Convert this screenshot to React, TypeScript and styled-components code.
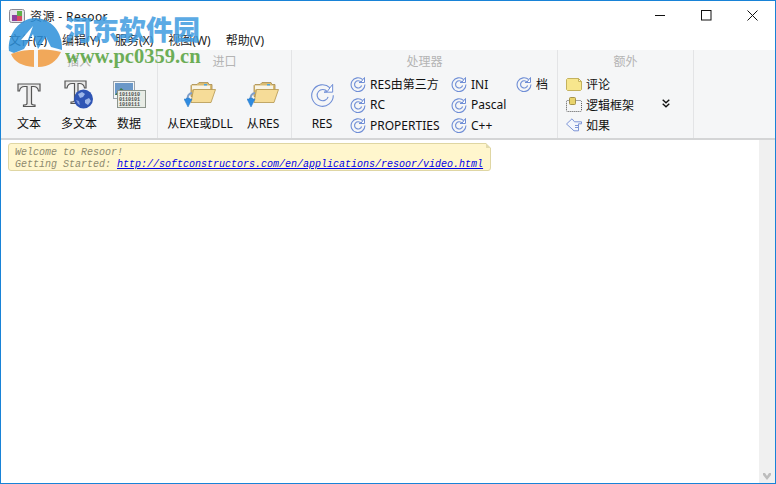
import { createGlobalStyle, styled } from "styled-components";

const GlobalStyle = createGlobalStyle`
  html, body {
    margin: 0;
    padding: 0;
    height: 100%;
    overflow: hidden;
  }
  #root {
    height: 100%;
  }
`;

const uiFont = `"Noto Sans", "Noto Sans CJK SC", sans-serif`;

function TextIcon() {
  return (
    <svg width="28" height="28" viewBox="0 0 28 28">
      <path
        d="M3 3h22v7h-1.500c-.5-3-1.500-4.500-5-4.500h-2v17c0 1 1 1.500 3.500 1.500v1.500H8.500V24c2.500 0 3.500-.5 3.500-1.500v-17H9.500c-3.500 0-4.500 1.500-5 4.500H3z"
        fill="#e9e9e9"
        stroke="#555"
        strokeWidth="1.200"
      />
    </svg>
  );
}

function RichTextIcon() {
  return (
    <svg width="30" height="30" viewBox="0 0 30 30">
      <path
        d="M1 1h21v7h-1.500c-.5-3-1.500-4.500-5-4.500h-1.500v17c0 1 1 1.500 3.500 1.500v1.500H7V22c2.500 0 3.500-.5 3.500-1.500v-17H8c-3.500 0-4.500 1.500-5 4.500H1z"
        fill="#e9e9e9"
        stroke="#555"
        strokeWidth="1.200"
      />
      <circle cx="19.500" cy="19" r="9.500" fill="#2f55b5" />
      <path d="M14 14l4-2 3 2-2 3-3 1zM21 20l4-2 2 3-3 4-3-2z" fill="#9db6e8" />
      <path d="M12 20l3 1 1 4-2-1z" fill="#7f9ade" />
    </svg>
  );
}

function DataIcon() {
  return (
    <svg width="33" height="27" viewBox="0 0 33 27">
      <rect x="0.500" y="0.500" width="21" height="17" fill="#f4f6f8" stroke="#9aa3ab" />
      <rect x="2" y="2" width="18" height="12" fill="#6b98c8" />
      <path d="M2 14l6-7 5 4 3-2 4 5z" fill="#3f7a48" />
      <rect x="4.500" y="9.500" width="28" height="17" fill="#e8ece6" stroke="#8b948c" />
      <g fill="#4b5150" fontFamily="Liberation Mono, monospace" fontSize="5" fontWeight="700">
        <text x="6" y="14.500">1011010</text>
        <text x="6" y="19.500">0110101</text>
        <text x="6" y="24.500">1010111</text>
      </g>
    </svg>
  );
}

function FolderImportIcon() {
  return (
    <svg width="32" height="26" viewBox="0 0 32 26">
      <path d="M7 3.500l1-1h5l2-2h9l1 2h3v12H7z" fill="#d9bc72" stroke="#a88c4c" strokeWidth="0.800" />
      <path d="M8 3.500h18v4H8z" fill="#f8f4e6" />
      <rect x="20" y="2" width="3" height="1.500" fill="#49a6e6" />
      <path d="M9.500 7.500h22l-4.500 13H7z" fill="#f6dc98" stroke="#b4954e" strokeWidth="0.800" />
      <path d="M8 11c-3 .5-4.500 3-4.500 6" fill="none" stroke="#7f9fc9" strokeWidth="2" />
      <path d="M0 17h2.500v-1h3v1H8l-4 8z" fill="#2f8be0" stroke="#2a78c4" strokeWidth="0.500" />
    </svg>
  );
}

function RefreshIcon({ size }: { size: number }) {
  return (
    <svg width={size} height={size} viewBox="0 0 16 16" fill="none" stroke="#6f8ed6">
      <path d="M12.800 3.700A6.900 6.900 0 1 0 14.900 8.500" strokeWidth="1.100" vectorEffect="non-scaling-stroke" />
      <path d="M11 6.200A3.600 3.600 0 1 0 11.600 9.500" strokeWidth="1.100" vectorEffect="non-scaling-stroke" />
      <path d="M9 6.500h5.500V1.500l-1.700 2.200L11 6.200z" fill="#fff" strokeWidth="1" vectorEffect="non-scaling-stroke" />
    </svg>
  );
}

function NoteIcon() {
  return (
    <svg width="16" height="13" viewBox="0 0 16 13">
      <path d="M1.500.500h11l3 3v8l-1 1h-13l-1-1v-10z" fill="#f7e68d" stroke="#c4b25e" />
      <path d="M12.500.500v3h3z" fill="#fdf8d8" stroke="#c4b25e" />
    </svg>
  );
}

function FrameIcon() {
  return (
    <svg width="16" height="15" viewBox="0 0 16 15">
      <rect x="0.500" y="3.500" width="15" height="11" rx="1" fill="none" stroke="#555" strokeDasharray="1 1" />
      <rect x="3.500" y="0.500" width="6" height="7" rx="1" fill="#e8d36c" stroke="#a5934a" />
    </svg>
  );
}

function PointerIcon() {
  return (
    <svg width="16" height="14" viewBox="0 0 16 14" fill="#f3f6fc" stroke="#7d95d6">
      <path d="M.5 6L6 .8l2.500 3h7v2h-3v7H8L.5 6z" />
      <path d="M9 7.500h3.500M9 9.500h3.500" fill="none" />
    </svg>
  );
}

function WatermarkLogo() {
  return (
    <svg width="56" height="50" viewBox="0 0 56 50">
      <path
        d="M2 33C0 15 14 0 28 0c16 0 28 14 27 32l-11-3-5-10-8 12-5-15-9 15-10 4z"
        fill="#2b8fd9"
        fillOpacity="0.85"
      />
      <path d="M14 22l12-14-5 14z" fill="#fff" />
      <path d="M4 36c10-4 18-4 23-4v17C15 48 7 44 4 36z" fill="#f09a3e" fillOpacity="0.85" />
      <path d="M31 32c7-1 15 0 23 2-4 9-12 15-23 15z" fill="#f09a3e" fillOpacity="0.85" />
    </svg>
  );
}

function ScrollDownGlyph() {
  return (
    <svg width="8" height="7" viewBox="0 0 8 7">
      <path d="M0 0h2l2 3 2-3h2v2L4 7 0 2z" fill="#bdbdbd" />
    </svg>
  );
}

export default function App() {
  return (
    <Win>
      <GlobalStyle />
      <Watermark>
        <WatermarkLogo />
        <WatermarkText>
          <WatermarkTitle>河东软件园</WatermarkTitle>
          <WatermarkUrl>www.pc0359.cn</WatermarkUrl>
        </WatermarkText>
      </Watermark>

      <TitleBar>
        <AppIcon>
          <svg width="16" height="14" viewBox="0 0 16 14">
            <rect x="0.500" y="0.500" width="15" height="13" rx="2" fill="#e5e3ea" stroke="#8a8892" />
            <rect x="3" y="6" width="5" height="6" fill="#8e3f9e" />
            <rect x="8" y="2" width="5" height="5" fill="#5fb04a" />
            <rect x="8" y="7" width="5" height="5" fill="#d84a64" />
          </svg>
        </AppIcon>
        <TitleText>资源 - Resoor</TitleText>
        <WindowButtons>
          <WindowButton>
            <svg width="11" height="11" viewBox="0 0 11 11">
              <path d="M0 5.500h10" stroke="#111" />
            </svg>
          </WindowButton>
          <WindowButton>
            <svg width="11" height="11" viewBox="0 0 11 11">
              <rect x="0.500" y="0.500" width="9.500" height="9.500" fill="none" stroke="#111" />
            </svg>
          </WindowButton>
          <WindowButton>
            <svg width="11" height="11" viewBox="0 0 11 11">
              <path d="M.5.500l10 10M10.500.500l-10 10" stroke="#111" />
            </svg>
          </WindowButton>
        </WindowButtons>
      </TitleBar>

      <MenuBar>
        <MenuItem>文件(Z)</MenuItem>
        <MenuItem>编辑(Y)</MenuItem>
        <MenuItem>服务(X)</MenuItem>
        <MenuItem>视图(W)</MenuItem>
        <MenuItem>帮助(V)</MenuItem>
      </MenuBar>

      <Ribbon>
        <Group $width={157}>
          <GroupTitle>插入</GroupTitle>
          <GroupBody $gap={0} $pad={3}>
            <LargeButton $width={50}>
              <LargeIcon><TextIcon /></LargeIcon>
              <span>文本</span>
            </LargeButton>
            <LargeButton $width={50}>
              <LargeIcon><RichTextIcon /></LargeIcon>
              <span>多文本</span>
            </LargeButton>
            <LargeButton $width={50}>
              <LargeIcon><DataIcon /></LargeIcon>
              <span>数据</span>
            </LargeButton>
          </GroupBody>
        </Group>
        <Group $width={134}>
          <GroupTitle>进口</GroupTitle>
          <GroupBody $gap={0} $pad={5}>
            <LargeButton $width={74}>
              <LargeIcon><FolderImportIcon /></LargeIcon>
              <span>从EXE或DLL</span>
            </LargeButton>
            <LargeButton $width={52}>
              <LargeIcon><FolderImportIcon /></LargeIcon>
              <span>从RES</span>
            </LargeButton>
          </GroupBody>
        </Group>
        <Group $width={266}>
          <GroupTitle>处理器</GroupTitle>
          <GroupBody $gap={6} $pad={8}>
            <LargeButton $width={44}>
              <LargeIcon><RefreshIcon size={25} /></LargeIcon>
              <span>RES</span>
            </LargeButton>
            <SmallColumn $width={95}>
              <SmallItem><RefreshIcon size={16} />RES由第三方</SmallItem>
              <SmallItem><RefreshIcon size={16} />RC</SmallItem>
              <SmallItem><RefreshIcon size={16} />PROPERTIES</SmallItem>
            </SmallColumn>
            <SmallColumn $width={59}>
              <SmallItem><RefreshIcon size={16} />INI</SmallItem>
              <SmallItem><RefreshIcon size={16} />Pascal</SmallItem>
              <SmallItem><RefreshIcon size={16} />C++</SmallItem>
            </SmallColumn>
            <SmallColumn $width={36}>
              <SmallItem><RefreshIcon size={16} />档</SmallItem>
            </SmallColumn>
          </GroupBody>
        </Group>
        <Group $width={136}>
          <GroupTitle>额外</GroupTitle>
          <GroupBody $gap={0} $pad={8}>
            <SmallColumn $width={96}>
              <SmallItem><NoteIcon />评论</SmallItem>
              <SmallItem><FrameIcon />逻辑框架</SmallItem>
              <SmallItem><PointerIcon />如果</SmallItem>
            </SmallColumn>
            <MoreButton>
              <svg width="8" height="9" viewBox="0 0 8 9" fill="none" stroke="#111" strokeWidth="1.400">
                <path d="M.7.700L4 3.700 7.300.700M.7 4.700L4 7.700l3.300-3" />
              </svg>
            </MoreButton>
          </GroupBody>
        </Group>
      </Ribbon>

      <Content>
        <Editor>
          <Note>
            <NoteLine>Welcome to Resoor!</NoteLine>
            <NoteLine>
              Getting Started: <NoteLink>http://softconstructors.com/en/applications/resoor/video.html</NoteLink>
            </NoteLine>
            <NoteCorner />
          </Note>
        </Editor>
        <Scrollbar>
          <ScrollDownGlyph />
        </Scrollbar>
      </Content>
    </Win>
  );
}

const Win = styled.div`
  position: relative;
  box-sizing: border-box;
  width: 776px;
  height: 484px;
  display: flex;
  flex-direction: column;
  background: #fff;
  border: 1px solid #1883d7;
  font-family: ${uiFont};
  color: #111;
  overflow: hidden;
`;

const Watermark = styled.div`
  position: absolute;
  left: 6px;
  top: 17px;
  display: flex;
  gap: 2px;
  pointer-events: none;
  z-index: 2;
`;

const WatermarkText = styled.div`
  display: flex;
  flex-direction: column;
  margin-top: -5px;
`;

const WatermarkTitle = styled.div`
  font-family: "Noto Sans CJK SC", sans-serif;
  font-weight: 900;
  font-size: 27px;
  line-height: 32px;
  color: #3f9ce0;
  opacity: 0.85;
`;

const WatermarkUrl = styled.div`
  font-family: "Liberation Serif", serif;
  font-weight: 700;
  font-size: 20.500px;
  line-height: 22px;
  color: #5ea646;
  opacity: 0.9;
`;

const TitleBar = styled.div`
  height: 29px;
  flex: none;
  display: flex;
  align-items: center;
  padding-left: 8px;
`;

const AppIcon = styled.div`
  display: flex;
  margin-right: 5px;
`;

const TitleText = styled.div`
  font-size: 12px;
  letter-spacing: 0.400px;
  color: #222;
`;

const WindowButtons = styled.div`
  margin-left: auto;
  display: flex;
`;

const WindowButton = styled.div`
  width: 46px;
  height: 29px;
  display: flex;
  align-items: center;
  justify-content: center;
`;

const MenuBar = styled.div`
  height: 20px;
  flex: none;
  display: flex;
  align-items: center;
  padding-left: 8px;
  gap: 15px;
`;

const MenuItem = styled.div`
  font-size: 12px;
  color: #222;
`;

const Ribbon = styled.div`
  height: 90px;
  flex: none;
  box-sizing: border-box;
  display: flex;
  background: #f5f6f7;
  border-bottom: 2px solid #d4d5d6;
`;

const Group = styled.div<{ $width: number }>`
  box-sizing: border-box;
  width: ${(p) => p.$width}px;
  flex: none;
  display: flex;
  flex-direction: column;
  border-right: 1px solid #e3e4e6;
`;

const GroupTitle = styled.div`
  height: 24px;
  padding-top: 1px;
  box-sizing: border-box;
  text-align: center;
  font-size: 12px;
  line-height: 22px;
  color: #b4b4b4;
`;

const GroupBody = styled.div<{ $gap: number; $pad: number }>`
  display: flex;
  gap: ${(p) => p.$gap}px;
  padding-left: ${(p) => p.$pad}px;
`;

const LargeButton = styled.div<{ $width: number }>`
  width: ${(p) => p.$width}px;
  flex: none;
  display: flex;
  flex-direction: column;
  align-items: center;
  font-size: 12px;
  line-height: 18px;
  white-space: nowrap;
`;

const LargeIcon = styled.div`
  height: 41px;
  display: flex;
  align-items: center;
`;

const SmallColumn = styled.div<{ $width: number }>`
  width: ${(p) => p.$width}px;
  flex: none;
  display: flex;
  flex-direction: column;
`;

const SmallItem = styled.div`
  height: 20.500px;
  display: flex;
  align-items: center;
  gap: 4px;
  font-size: 12px;
  white-space: nowrap;
`;

const MoreButton = styled.div`
  display: flex;
  align-items: center;
  height: 58px;
`;

const Content = styled.div`
  flex: 1;
  min-height: 0;
  display: flex;
`;

const Editor = styled.div`
  flex: 1;
  padding: 3px 0 0 7px;
`;

const Note = styled.div`
  position: relative;
  box-sizing: border-box;
  width: 483px;
  height: 28px;
  padding: 3px 6px 0;
  background: #fff6cd;
  border: 1px solid #dfd6a3;
  border-radius: 3px;
  font-family: "Liberation Mono", monospace;
  font-style: italic;
  font-size: 10px;
  line-height: 12px;
  color: #8e8a6e;
`;

const NoteLine = styled.div`
  white-space: pre;
`;

const NoteLink = styled.span`
  color: #0000e6;
  text-decoration: underline;
`;

const NoteCorner = styled.div`
  position: absolute;
  right: -1px;
  top: -1px;
  width: 0;
  height: 0;
  border-top: 5px solid #fff;
  border-left: 5px solid #e3dbad;
`;

const Scrollbar = styled.div`
  width: 16px;
  flex: none;
  background: #f0f0f0;
  display: flex;
  flex-direction: column;
  align-items: center;
  justify-content: flex-end;
  padding-bottom: 3px;
`;
